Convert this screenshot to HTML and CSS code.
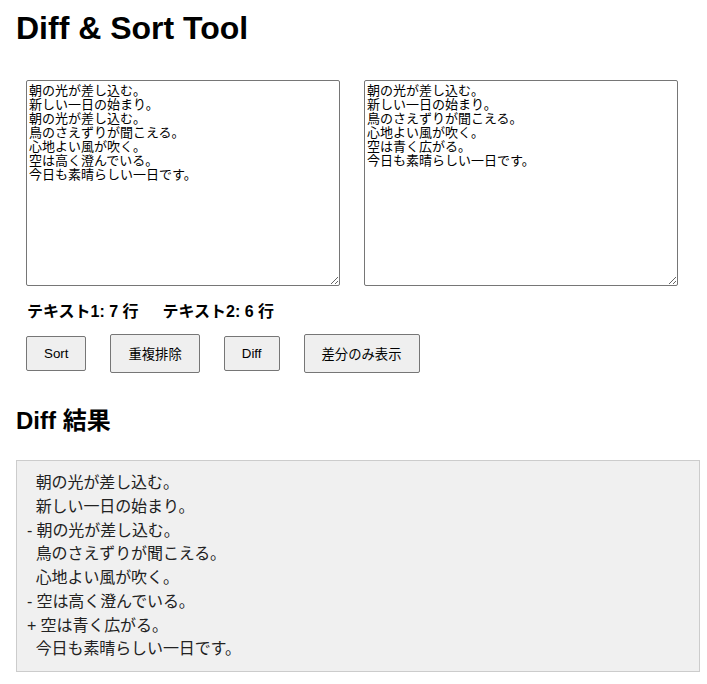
FILE: index.html
```html
<!DOCTYPE html>
<html lang="ja">
<head>
<meta charset="utf-8">
<title>Diff &amp; Sort Tool</title>
<link rel="stylesheet" href="styles.css">
</head>
<body>
<h1 class="title">Diff &amp; Sort Tool</h1>
<div class="editors">
<textarea class="editor">朝の光が差し込む。
新しい一日の始まり。
朝の光が差し込む。
鳥のさえずりが聞こえる。
心地よい風が吹く。
空は高く澄んでいる。
今日も素晴らしい一日です。</textarea>
<textarea class="editor">朝の光が差し込む。
新しい一日の始まり。
鳥のさえずりが聞こえる。
心地よい風が吹く。
空は青く広がる。
今日も素晴らしい一日です。</textarea>
</div>
<div class="stats">
<span class="stat">テキスト1: 7 行</span>
<span class="stat">テキスト2: 6 行</span>
</div>
<div class="buttons">
<button class="btn">Sort</button>
<button class="btn">重複排除</button>
<button class="btn">Diff</button>
<button class="btn">差分のみ表示</button>
</div>
<h2 class="subtitle">Diff 結果</h2>
<div class="result">
<div class="line">  朝の光が差し込む。</div>
<div class="line">  新しい一日の始まり。</div>
<div class="line">- 朝の光が差し込む。</div>
<div class="line">  鳥のさえずりが聞こえる。</div>
<div class="line">  心地よい風が吹く。</div>
<div class="line">- 空は高く澄んでいる。</div>
<div class="line">+ 空は青く広がる。</div>
<div class="line">  今日も素晴らしい一日です。</div>
</div>
</body>
</html>
```
FILE: styles.css
```css
html, body {
  background: #ffffff;
}
body {
  margin: 0;
  padding: 10px 7px 0 16px;
  font-family: "Liberation Sans", "Noto Sans CJK JP", sans-serif;
  color: #000;
}
.title {
  margin: 0;
  font-size: 32px;
  line-height: 37px;
  font-weight: bold;
}
.editors {
  display: flex;
  gap: 24px;
  margin-top: 33px;
  padding: 0 10px;
}
.editor {
  box-sizing: border-box;
  width: 314px;
  height: 206px;
  margin: 0;
  padding: 2px;
  border: 1px solid #767676;
  border-radius: 2px;
  font-family: "Noto Sans CJK JP", sans-serif;
  font-size: 13px;
  line-height: 14px;
  color: #000;
  background: #fff;
}
.stats {
  display: flex;
  gap: 24px;
  margin-top: 16px;
  padding-left: 11px;
  font-size: 16px;
  line-height: 20px;
  font-weight: bold;
}
.buttons {
  display: flex;
  align-items: center;
  gap: 24px;
  margin-top: 12px;
  padding-left: 10px;
}
.btn {
  margin: 0;
  padding: 9px 17px;
  font-family: "Liberation Sans", "Noto Sans CJK JP", sans-serif;
  font-size: 13.33px;
  color: #000;
  background: #efefef;
  border: 1px solid #767676;
  border-radius: 2px;
}
.subtitle {
  margin: 34px 0 0;
  font-size: 24px;
  line-height: 28px;
  font-weight: bold;
}
.result {
  margin-top: 25px;
  padding: 10px;
  background: #f0f0f0;
  border: 1px solid #cccccc;
  font-size: 16px;
  line-height: 23.75px;
  color: #222;
  letter-spacing: -0.1px;
}
.line {
  white-space: pre;
}
```
